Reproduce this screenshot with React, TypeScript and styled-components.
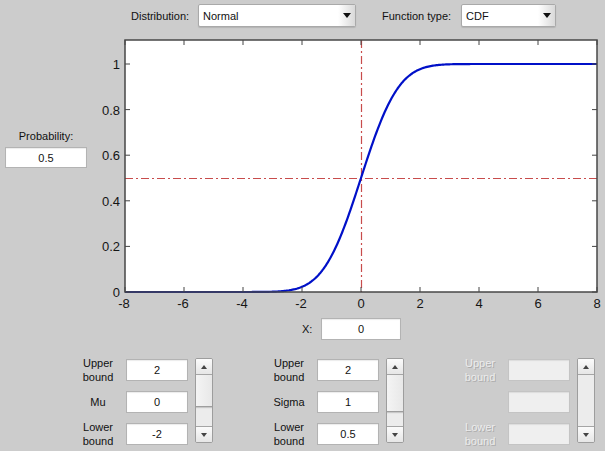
import React from "react";
import styled, { createGlobalStyle } from "styled-components";

const GlobalStyle = createGlobalStyle`
  *, *::before, *::after { box-sizing: border-box; }
  html, body { margin: 0; padding: 0; background: #cccccc; }
  body { font-family: "Liberation Sans", Arial, Helvetica, sans-serif; }
`;

const Root = styled.div`
  width: 605px;
  height: 451px;
  display: flex;
  flex-direction: column;
  background: #cccccc;
  color: #111111;
  font-size: 11px;
  overflow: hidden;
`;

const TopBar = styled.div`
  display: flex;
  align-items: center;
  height: 32px;
  padding: 4px 0 5px 131px;
`;

const TopLabel = styled.span<{ $width: number; $offset?: number }>`
  width: ${(p) => p.$width}px;
  margin-left: ${(p) => p.$offset ?? 0}px;
  white-space: nowrap;
  font-size: 11px;
`;

const Select = styled.div<{ $width: number }>`
  width: ${(p) => p.$width}px;
  height: 23px;
  display: flex;
  align-items: center;
  padding-left: 4px;
  background: #ffffff;
  border: 1px solid #a9a9a9;
  border-radius: 2px;
  box-shadow: 0 1px 1px rgba(0, 0, 0, 0.12);
  font-size: 11px;
  overflow: hidden;
`;

const SelectArrow = styled.div`
  margin-left: auto;
  width: 17px;
  height: 100%;
  display: flex;
  align-items: center;
  justify-content: center;
  background: linear-gradient(to right, #ffffff, #d9d9d9);
  &::after {
    content: "";
    border-left: 4px solid transparent;
    border-right: 4px solid transparent;
    border-top: 5px solid #111;
  }
`;

const Middle = styled.div`
  display: flex;
  height: 280px;
`;

const SideColumn = styled.div`
  width: 100px;
  padding: 97px 0 0 5px;
`;

const SideGroup = styled.div`
  width: 82px;
  display: flex;
  flex-direction: column;
  align-items: center;
  gap: 4px;
`;

const SideLabel = styled.div`
  line-height: 14px;
  font-size: 11px;
  white-space: nowrap;
`;

const TextBox = styled.div<{ $width: number; $height?: number; $disabled?: boolean }>`
  width: ${(p) => p.$width}px;
  height: ${(p) => p.$height ?? 22}px;
  display: flex;
  align-items: center;
  justify-content: center;
  background: ${(p) => (p.$disabled ? "#efefef" : "#ffffff")};
  border: 1px solid ${(p) => (p.$disabled ? "#c4c4c4" : "#b3b3b3")};
  box-shadow: inset 0 1px 1px rgba(0, 0, 0, 0.08);
  font-size: 11px;
  color: #111111;
`;

const ChartSvg = styled.svg`
  display: block;
  flex: none;
`;

const XRow = styled.div`
  display: flex;
  align-items: center;
  height: 22px;
  margin-top: 6px;
  padding-left: 302px;
  gap: 8px;
`;

const XLabel = styled.span`
  width: 11px;
  font-size: 11px;
`;

const Panels = styled.div`
  display: flex;
  gap: 48px;
  padding-left: 70px;
  margin-top: 18px;
`;

const Panel = styled.div`
  display: flex;
  gap: 7px;
`;

const Fields = styled.div`
  display: grid;
  grid-template-columns: 56px 62px;
  grid-auto-rows: 22px;
  row-gap: 10px;
  padding-top: 1px;
  align-items: center;
`;

const FieldLabel = styled.div<{ $disabled?: boolean }>`
  text-align: center;
  line-height: 14px;
  font-size: 11px;
  color: ${(p) => (p.$disabled ? "#ececec" : "#111111")};
  text-shadow: ${(p) => (p.$disabled ? "1px 1px 0 rgba(140,140,140,0.55)" : "none")};
`;

const Scrollbar = styled.div`
  width: 18px;
  height: 85px;
  display: flex;
  flex-direction: column;
  border: 1px solid #9d9d9d;
  border-radius: 2px;
  background: #ebebeb;
  overflow: hidden;
`;

const ScrollButton = styled.div<{ $dir: "up" | "down" }>`
  height: 16px;
  flex: none;
  display: flex;
  align-items: center;
  justify-content: center;
  background: linear-gradient(to bottom, #fbfbfb, #e6e6e6);
  border-bottom: ${(p) => (p.$dir === "up" ? "1px solid #a5a5a5" : "none")};
  border-top: ${(p) => (p.$dir === "down" ? "1px solid #a5a5a5" : "none")};
  &::after {
    content: "";
    border-left: 3.5px solid transparent;
    border-right: 3.5px solid transparent;
    ${(p) =>
      p.$dir === "up"
        ? "border-bottom: 4px solid #444;"
        : "border-top: 4px solid #444;"}
  }
`;

const Track = styled.div`
  flex: 1;
  display: flex;
  flex-direction: column;
  background: #ececec;
`;

const Thumb = styled.div<{ $top: number; $height: number }>`
  margin-top: ${(p) => p.$top}px;
  height: ${(p) => p.$height}px;
  background: linear-gradient(to right, #f4f4f4, #e8e8e8);
  border-bottom: 1px solid #9e9e9e;
  box-shadow: 0 1px 1px rgba(0, 0, 0, 0.15);
`;

// ---------- chart -----------
const X0 = 125;
const X1 = 597;
const YB = 292;
const YT = 40;
const px = (x: number) => X0 + ((x + 8) * (X1 - X0)) / 16;
const py = (y: number) => YB - y * 228;

function erf(x: number) {
  const s = x < 0 ? -1 : 1;
  const a = Math.abs(x);
  const t = 1 / (1 + 0.3275911 * a);
  const y =
    1 -
    ((((1.061405429 * t - 1.453152027) * t + 1.421413741) * t - 0.284496736) * t +
      0.254829592) *
      t *
      Math.exp(-a * a);
  return s * y;
}
const cdf = (x: number) => 0.5 * (1 + erf(x / Math.SQRT2));

const curve = (() => {
  const pts: string[] = [];
  for (let i = 0; i <= 400; i++) {
    const x = -8 + (16 * i) / 400;
    pts.push(`${px(x).toFixed(2)},${py(cdf(x)).toFixed(2)}`);
  }
  return "M" + pts.join(" L");
})();

const xTicks = [-8, -6, -4, -2, 0, 2, 4, 6, 8];
const yTicks = [0, 0.2, 0.4, 0.6, 0.8, 1];

function Chart() {
  return (
    <ChartSvg width={505} height={280} viewBox="100 32 505 280">
      <rect x={X0} y={YT} width={X1 - X0} height={YB - YT} fill="#ffffff" />
      <line
        x1={px(0) + 0.5}
        y1={YT}
        x2={px(0) + 0.5}
        y2={YB}
        stroke="#c84c4c"
        strokeWidth={1.2}
        strokeDasharray="8 3 2 3"
      />
      <line
        x1={X0}
        y1={py(0.5) + 0.5}
        x2={X1}
        y2={py(0.5) + 0.5}
        stroke="#c84c4c"
        strokeWidth={1.2}
        strokeDasharray="8 3 2 3"
      />
      <path d={curve} fill="none" stroke="#0010c8" strokeWidth={2.2} strokeLinejoin="round" />
      {xTicks.map((t) => (
        <g key={"x" + t}>
          <line x1={px(t)} y1={YB} x2={px(t)} y2={YB - 5} stroke="#444" strokeWidth={1} />
          <line x1={px(t)} y1={YT} x2={px(t)} y2={YT + 5} stroke="#444" strokeWidth={1} />
          <text
            x={px(t) - (t < 0 ? 1 : 0)}
            y={308}
            textAnchor="middle"
            fontFamily="Liberation Sans, Arial, sans-serif"
            fontSize={13}
            fill="#151515"
          >
            {t}
          </text>
        </g>
      ))}
      {yTicks.map((t) => (
        <g key={"y" + t}>
          <line x1={X0} y1={py(t)} x2={X0 + 5} y2={py(t)} stroke="#444" strokeWidth={1} />
          <line x1={X1} y1={py(t)} x2={X1 - 5} y2={py(t)} stroke="#444" strokeWidth={1} />
          <text
            x={120}
            y={py(t) + 5}
            textAnchor="end"
            fontFamily="Liberation Sans, Arial, sans-serif"
            fontSize={13}
            fill="#151515"
          >
            {t}
          </text>
        </g>
      ))}
      <rect
        x={X0}
        y={YT}
        width={X1 - X0}
        height={YB - YT}
        fill="none"
        stroke="#474747"
        strokeWidth={1.5}
      />
    </ChartSvg>
  );
}

type PanelData = {
  middle: string;
  upper: string;
  mid: string;
  lower: string;
  disabled?: boolean;
  thumb?: { top: number; height: number };
};

const panels: PanelData[] = [
  { middle: "Mu", upper: "2", mid: "0", lower: "-2", thumb: { top: 0, height: 32 } },
  { middle: "Sigma", upper: "2", mid: "1", lower: "0.5", thumb: { top: 0, height: 37 } },
  { middle: "", upper: "", mid: "", lower: "", disabled: true },
];

function ParamPanel({ data }: { data: PanelData }) {
  const d = data.disabled;
  return (
    <Panel>
      <Fields>
        <FieldLabel $disabled={d}>
          Upper
          <br />
          bound
        </FieldLabel>
        <TextBox $width={62} $disabled={d}>
          {data.upper}
        </TextBox>
        <FieldLabel $disabled={d}>{data.middle}</FieldLabel>
        <TextBox $width={62} $disabled={d}>
          {data.mid}
        </TextBox>
        <FieldLabel $disabled={d}>
          Lower
          <br />
          bound
        </FieldLabel>
        <TextBox $width={62} $disabled={d}>
          {data.lower}
        </TextBox>
      </Fields>
      <Scrollbar>
        <ScrollButton $dir="up" />
        <Track>{data.thumb && <Thumb $top={data.thumb.top} $height={data.thumb.height} />}</Track>
        <ScrollButton $dir="down" />
      </Scrollbar>
    </Panel>
  );
}

export default function App() {
  return (
    <>
      <GlobalStyle />
      <Root>
        <TopBar>
          <TopLabel $width={67}>Distribution:</TopLabel>
          <Select $width={158}>
            Normal
            <SelectArrow />
          </Select>
          <TopLabel $width={79} $offset={26}>
            Function type:
          </TopLabel>
          <Select $width={95}>
            CDF
            <SelectArrow />
          </Select>
        </TopBar>
        <Middle>
          <SideColumn>
            <SideGroup>
              <SideLabel>Probability:</SideLabel>
              <TextBox $width={82} $height={21}>
                0.5
              </TextBox>
            </SideGroup>
          </SideColumn>
          <Chart />
        </Middle>
        <XRow>
          <XLabel>X:</XLabel>
          <TextBox $width={80}>0</TextBox>
        </XRow>
        <Panels>
          {panels.map((p, i) => (
            <ParamPanel key={i} data={p} />
          ))}
        </Panels>
      </Root>
    </>
  );
}
